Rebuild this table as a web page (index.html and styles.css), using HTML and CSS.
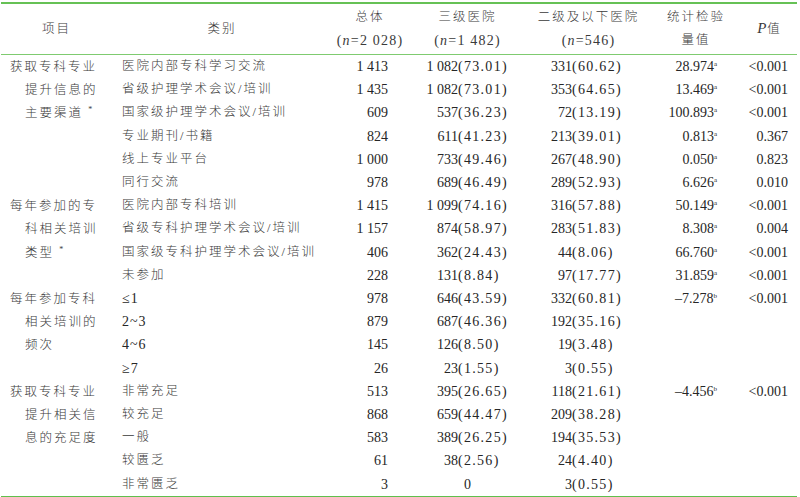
FILE: index.html
```html
<!DOCTYPE html>
<html lang="zh-CN">
<head>
<meta charset="utf-8">
<title>表</title>
<link rel="stylesheet" href="styles.css">
</head>
<body>
<table class="tbl">
  <colgroup>
    <col class="w1"><col class="w2"><col class="w3"><col class="w4"><col class="w5"><col class="w6"><col class="w7">
  </colgroup>
  <thead>
    <tr>
      <th class="h cj">项目</th>
      <th class="h cj">类别</th>
      <th class="h"><div class="cj">总体</div><div class="hp">(<i>n</i>=2 028)</div></th>
      <th class="h"><div class="cj">三级医院</div><div class="hp">(<i>n</i>=1 482)</div></th>
      <th class="h"><div class="cj">二级及以下医院</div><div class="hp">(<i>n</i>=546)</div></th>
      <th class="h"><div class="cj">统计检验</div><div class="cj">量值</div></th>
      <th class="h"><i class="pv">P</i><span class="cj">值</span></th>
    </tr>
  </thead>
  <tbody>
    <tr>
      <td class="grp" rowspan="6"><div class="l1">获取专科专业</div><div class="ln">提升信息的</div><div class="ln">主要渠道 <sup class="ast">*</sup></div></td>
      <td class="cat">医院内部专科学习交流</td><td class="tot">1 413</td>
      <td class="c4"><span class="n4">1 082</span><span class="pc">(73.01)</span></td>
      <td class="c5"><span class="n5">331</span><span class="pc">(60.62)</span></td>
      <td class="st">28.974<sup class="sp">a</sup></td><td class="pv7">&lt;0.001</td>
    </tr>
    <tr>
      <td class="cat">省级护理学术会议/培训</td><td class="tot">1 435</td>
      <td class="c4"><span class="n4">1 082</span><span class="pc">(73.01)</span></td>
      <td class="c5"><span class="n5">353</span><span class="pc">(64.65)</span></td>
      <td class="st">13.469<sup class="sp">a</sup></td><td class="pv7">&lt;0.001</td>
    </tr>
    <tr>
      <td class="cat">国家级护理学术会议/培训</td><td class="tot">609</td>
      <td class="c4"><span class="n4">537</span><span class="pc">(36.23)</span></td>
      <td class="c5"><span class="n5">72</span><span class="pc">(13.19)</span></td>
      <td class="st">100.893<sup class="sp">a</sup></td><td class="pv7">&lt;0.001</td>
    </tr>
    <tr>
      <td class="cat">专业期刊/书籍</td><td class="tot">824</td>
      <td class="c4"><span class="n4">611</span><span class="pc">(41.23)</span></td>
      <td class="c5"><span class="n5">213</span><span class="pc">(39.01)</span></td>
      <td class="st">0.813<sup class="sp">a</sup></td><td class="pv7">0.367</td>
    </tr>
    <tr>
      <td class="cat">线上专业平台</td><td class="tot">1 000</td>
      <td class="c4"><span class="n4">733</span><span class="pc">(49.46)</span></td>
      <td class="c5"><span class="n5">267</span><span class="pc">(48.90)</span></td>
      <td class="st">0.050<sup class="sp">a</sup></td><td class="pv7">0.823</td>
    </tr>
    <tr>
      <td class="cat">同行交流</td><td class="tot">978</td>
      <td class="c4"><span class="n4">689</span><span class="pc">(46.49)</span></td>
      <td class="c5"><span class="n5">289</span><span class="pc">(52.93)</span></td>
      <td class="st">6.626<sup class="sp">a</sup></td><td class="pv7">0.010</td>
    </tr>

    <tr>
      <td class="grp" rowspan="4"><div class="l1">每年参加的专</div><div class="ln">科相关培训</div><div class="ln">类型 <sup class="ast">*</sup></div></td>
      <td class="cat">医院内部专科培训</td><td class="tot">1 415</td>
      <td class="c4"><span class="n4">1 099</span><span class="pc">(74.16)</span></td>
      <td class="c5"><span class="n5">316</span><span class="pc">(57.88)</span></td>
      <td class="st">50.149<sup class="sp">a</sup></td><td class="pv7">&lt;0.001</td>
    </tr>
    <tr>
      <td class="cat">省级专科护理学术会议/培训</td><td class="tot">1 157</td>
      <td class="c4"><span class="n4">874</span><span class="pc">(58.97)</span></td>
      <td class="c5"><span class="n5">283</span><span class="pc">(51.83)</span></td>
      <td class="st">8.308<sup class="sp">a</sup></td><td class="pv7">0.004</td>
    </tr>
    <tr>
      <td class="cat">国家级专科护理学术会议/培训</td><td class="tot">406</td>
      <td class="c4"><span class="n4">362</span><span class="pc">(24.43)</span></td>
      <td class="c5"><span class="n5">44</span><span class="pc">(8.06)</span></td>
      <td class="st">66.760<sup class="sp">a</sup></td><td class="pv7">&lt;0.001</td>
    </tr>
    <tr>
      <td class="cat">未参加</td><td class="tot">228</td>
      <td class="c4"><span class="n4">131</span><span class="pc">(8.84)</span></td>
      <td class="c5"><span class="n5">97</span><span class="pc">(17.77)</span></td>
      <td class="st">31.859<sup class="sp">a</sup></td><td class="pv7">&lt;0.001</td>
    </tr>

    <tr>
      <td class="grp" rowspan="4"><div class="l1">每年参加专科</div><div class="ln">相关培训的</div><div class="ln">频次</div></td>
      <td class="cat catn">≤1</td><td class="tot">978</td>
      <td class="c4"><span class="n4">646</span><span class="pc">(43.59)</span></td>
      <td class="c5"><span class="n5">332</span><span class="pc">(60.81)</span></td>
      <td class="st">–7.278<sup class="sp">b</sup></td><td class="pv7">&lt;0.001</td>
    </tr>
    <tr>
      <td class="cat catn">2~3</td><td class="tot">879</td>
      <td class="c4"><span class="n4">687</span><span class="pc">(46.36)</span></td>
      <td class="c5"><span class="n5">192</span><span class="pc">(35.16)</span></td>
      <td class="st"></td><td class="pv7"></td>
    </tr>
    <tr>
      <td class="cat catn">4~6</td><td class="tot">145</td>
      <td class="c4"><span class="n4">126</span><span class="pc">(8.50)</span></td>
      <td class="c5"><span class="n5">19</span><span class="pc">(3.48)</span></td>
      <td class="st"></td><td class="pv7"></td>
    </tr>
    <tr>
      <td class="cat catn">≥7</td><td class="tot">26</td>
      <td class="c4"><span class="n4">23</span><span class="pc">(1.55)</span></td>
      <td class="c5"><span class="n5">3</span><span class="pc">(0.55)</span></td>
      <td class="st"></td><td class="pv7"></td>
    </tr>

    <tr>
      <td class="grp" rowspan="5"><div class="l1">获取专科专业</div><div class="ln">提升相关信</div><div class="ln">息的充足度</div></td>
      <td class="cat">非常充足</td><td class="tot">513</td>
      <td class="c4"><span class="n4">395</span><span class="pc">(26.65)</span></td>
      <td class="c5"><span class="n5">118</span><span class="pc">(21.61)</span></td>
      <td class="st">–4.456<sup class="sp">b</sup></td><td class="pv7">&lt;0.001</td>
    </tr>
    <tr>
      <td class="cat">较充足</td><td class="tot">868</td>
      <td class="c4"><span class="n4">659</span><span class="pc">(44.47)</span></td>
      <td class="c5"><span class="n5">209</span><span class="pc">(38.28)</span></td>
      <td class="st"></td><td class="pv7"></td>
    </tr>
    <tr>
      <td class="cat">一般</td><td class="tot">583</td>
      <td class="c4"><span class="n4">389</span><span class="pc">(26.25)</span></td>
      <td class="c5"><span class="n5">194</span><span class="pc">(35.53)</span></td>
      <td class="st"></td><td class="pv7"></td>
    </tr>
    <tr>
      <td class="cat">较匮乏</td><td class="tot">61</td>
      <td class="c4"><span class="n4">38</span><span class="pc">(2.56)</span></td>
      <td class="c5"><span class="n5">24</span><span class="pc">(4.40)</span></td>
      <td class="st"></td><td class="pv7"></td>
    </tr>
    <tr class="last">
      <td class="cat">非常匮乏</td><td class="tot">3</td>
      <td class="c4 zero">0</td>
      <td class="c5"><span class="n5">3</span><span class="pc">(0.55)</span></td>
      <td class="st"></td><td class="pv7"></td>
    </tr>
  </tbody>
</table>
</body>
</html>
```

FILE: styles.css
```css
html, body {
  margin: 0;
  padding: 0;
  background: #ffffff;
}

.tbl {
  margin: 2px 0 0 1px;
  width: 796px;
  table-layout: fixed;
  border-collapse: collapse;
  font-family: "Liberation Serif", "Noto Sans CJK SC", serif;
  font-size: 14px;
  font-weight: 300;
  color: #262626;
}

.w1 { width: 111px; }
.w2 { width: 220px; }
.w3 { width: 76px; }
.w4 { width: 119px; }
.w5 { width: 123px; }
.w6 { width: 92px; }
.w7 { width: 55px; }

.tbl thead tr {
  border-top: 2px solid #66c155;
  border-bottom: 1px solid #7fcb70;
}

.tbl tbody tr.last {
  border-bottom: 2px solid #5fbf4c;
}

.tbl th,
.tbl td {
  padding: 0;
  white-space: nowrap;
}

.h {
  height: 50px;
  font-weight: 300;
  text-align: center;
  vertical-align: middle;
  line-height: 23px;
  color: #3a3a3a;
}

.cj {
  font-size: 12.5px;
  letter-spacing: 2px;
}

.hp {
  font-size: 14px;
  letter-spacing: 1.2px;
}

.pv {
  font-size: 15px;
  margin-right: 1px;
}

.tbl td {
  height: 23.2px;
  line-height: 23.2px;
  vertical-align: middle;
}

.grp {
  font-size: 12.5px;
  letter-spacing: 2px;
  color: #3a3a3a;
  vertical-align: top !important;
  padding-top: 1px !important;
}

.grp .l1 { padding-left: 9px; }
.grp .ln { padding-left: 24px; }

.ast {
  font-size: 8px;
  vertical-align: 5px;
  line-height: 0;
  letter-spacing: 0;
}

.cat {
  padding-left: 10px !important;
  font-size: 12.5px;
  letter-spacing: 2px;
  color: #3a3a3a;
}

.catn {
  font-size: 14px;
  letter-spacing: 1px;
  color: #262626;
}

.tot {
  text-align: right;
  padding-right: 20px !important;
}

.n4 {
  display: inline-block;
  width: 50px;
  text-align: right;
}

.n5 {
  display: inline-block;
  width: 45px;
  text-align: right;
}

.pc {
  letter-spacing: 1.3px;
}

.zero {
  text-align: center;
}

.st {
  text-align: right;
  padding-right: 25px !important;
}

.sp {
  font-size: 7px;
  vertical-align: 5px;
  line-height: 0;
}

.pv7 {
  text-align: right;
  padding-right: 9px !important;
}
```
